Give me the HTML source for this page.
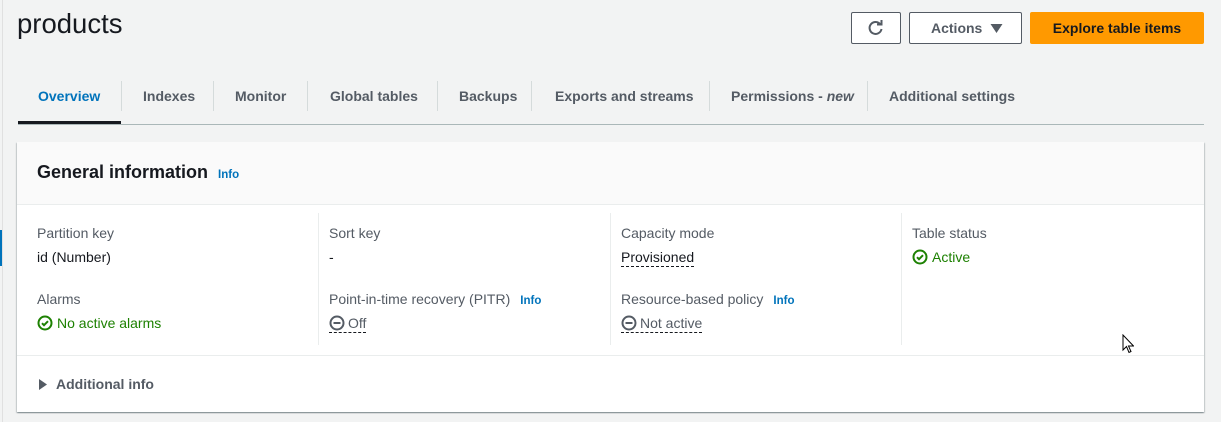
<!DOCTYPE html>
<html><head><style>
*{margin:0;padding:0;box-sizing:border-box}
body{width:1221px;height:422px;background:#f2f3f3;font-family:"Liberation Sans",sans-serif;color:#16191f;position:relative;overflow:hidden;font-size:14px}
.a{position:absolute;white-space:nowrap}
.tab{position:absolute;top:88px;font-weight:bold;font-size:14px;color:#545b64}
.sep{position:absolute;top:81px;width:1px;height:30px;background:#d5dbdb}
.lbl{position:absolute;color:#545b64;font-size:14px}
.val{position:absolute;font-size:14px}
.info{color:#0073bb;font-weight:bold;font-size:11.5px;margin-left:8px}
.dash{border-bottom:1px dashed #16191f;padding-bottom:1px}
.vsep{position:absolute;top:213px;width:1px;height:132px;background:#eaeded}
.grn{color:#1d8102}
</style></head><body>
<div class="a" style="left:0;top:0;width:3px;height:422px;border-right:1px solid #e0e0e0"></div>
<div class="a" style="left:0;top:230px;width:2px;height:36px;background:#0073bb"></div>
<div class="a" style="left:17px;top:8px;font-size:27.5px;color:#16191f">products</div>

<div class="a" style="left:851px;top:12px;width:50px;height:32px;border:1px solid #545b64;background:#fff;border-radius:2px"></div>
<svg class="a" style="left:866px;top:19px" width="20" height="18" viewBox="0 0 20 18"><path d="M14.5 5.5A6 6 0 1 0 15.5 10" fill="none" stroke="#545b64" stroke-width="2"/><path d="M11 5.5h4.5V1" fill="none" stroke="#545b64" stroke-width="2"/></svg>
<div class="a" style="left:909px;top:12px;width:113px;height:32px;border:1px solid #545b64;background:#fff;border-radius:2px;font-weight:bold;color:#545b64;font-size:14px;line-height:30px;padding-left:21px">Actions</div>
<svg class="a" style="left:990px;top:23px" width="13" height="11" viewBox="0 0 13 11"><path d="M0.5 1h12l-6 9z" fill="#545b64"/></svg>
<div class="a" style="left:1030px;top:12px;width:174px;height:32px;background:#ff9900;border-radius:2px;font-weight:bold;color:#16191f;font-size:14px;line-height:32px;text-align:center">Explore table items</div>

<div class="tab" style="left:38px;color:#0073bb">Overview</div>
<div class="sep" style="left:121px"></div>
<div class="tab" style="left:143px">Indexes</div>
<div class="sep" style="left:213px"></div>
<div class="tab" style="left:235px">Monitor</div>
<div class="sep" style="left:307px"></div>
<div class="tab" style="left:330px">Global tables</div>
<div class="sep" style="left:437px"></div>
<div class="tab" style="left:459px">Backups</div>
<div class="sep" style="left:531px"></div>
<div class="tab" style="left:555px">Exports and streams</div>
<div class="sep" style="left:709px"></div>
<div class="tab" style="left:731px">Permissions - <i>new</i></div>
<div class="sep" style="left:867px"></div>
<div class="tab" style="left:889px">Additional settings</div>
<div class="a" style="left:18px;top:124px;width:1186px;height:1px;background:#aab7b8"></div>
<div class="a" style="left:18px;top:121px;width:103px;height:3px;background:#16191f"></div>

<div class="a" style="left:17px;top:142px;width:1187px;height:270px;background:#fff;box-shadow:0 1px 1px 0 rgba(0,28,36,.3),1px 1px 1px 0 rgba(0,28,36,.15),-1px 1px 1px 0 rgba(0,28,36,.15)"></div>
<div class="a" style="left:17px;top:142px;width:1187px;height:63px;background:#fafafa;border-bottom:1px solid #eaeded"></div>
<div class="a" style="left:37px;top:162px;font-size:18px;font-weight:bold">General information<span class="info" style="font-size:11.5px;margin-left:10px">Info</span></div>

<div class="vsep" style="left:318px"></div>
<div class="vsep" style="left:610px"></div>
<div class="vsep" style="left:901px"></div>

<div class="lbl" style="left:37px;top:225px">Partition key</div>
<div class="val" style="left:37px;top:249px">id (Number)</div>
<div class="lbl" style="left:37px;top:291px">Alarms</div>
<div class="val grn" style="left:37px;top:315px"><svg width="16" height="16" viewBox="0 0 16 16" style="vertical-align:-3px;margin-right:4px"><circle cx="8" cy="8" r="6.5" fill="none" stroke="#1d8102" stroke-width="2"/><path d="M5 8.2l2 2 4-4" fill="none" stroke="#1d8102" stroke-width="2"/></svg>No active alarms</div>

<div class="lbl" style="left:329px;top:225px">Sort key</div>
<div class="val" style="left:329px;top:249px">-</div>
<div class="lbl" style="left:329px;top:291px">Point-in-time recovery (PITR)<span class="info" style="margin-left:10px">Info</span></div>
<div class="val dash" style="left:329px;top:315px;color:#545b64;border-color:#16191f"><svg width="16" height="16" viewBox="0 0 16 16" style="vertical-align:-3px;margin-right:3px"><circle cx="8" cy="8" r="6.5" fill="none" stroke="#545b64" stroke-width="2"/><path d="M4.5 8h7" stroke="#545b64" stroke-width="2"/></svg>Off</div>

<div class="lbl" style="left:621px;top:225px">Capacity mode</div>
<div class="val dash" style="left:621px;top:249px">Provisioned</div>
<div class="lbl" style="left:621px;top:291px">Resource-based policy<span class="info" style="margin-left:10px">Info</span></div>
<div class="val dash" style="left:621px;top:315px;color:#545b64"><svg width="16" height="16" viewBox="0 0 16 16" style="vertical-align:-3px;margin-right:3px"><circle cx="8" cy="8" r="6.5" fill="none" stroke="#545b64" stroke-width="2"/><path d="M4.5 8h7" stroke="#545b64" stroke-width="2"/></svg>Not active</div>

<div class="lbl" style="left:912px;top:225px">Table status</div>
<div class="val grn" style="left:912px;top:249px"><svg width="16" height="16" viewBox="0 0 16 16" style="vertical-align:-3px;margin-right:4px"><circle cx="8" cy="8" r="6.5" fill="none" stroke="#1d8102" stroke-width="2"/><path d="M5 8.2l2 2 4-4" fill="none" stroke="#1d8102" stroke-width="2"/></svg>Active</div>

<div class="a" style="left:17px;top:355px;width:1187px;height:1px;background:#eaeded"></div>
<svg class="a" style="left:39px;top:379px" width="9" height="11" viewBox="0 0 9 11"><path d="M0 0l8 5.5L0 11z" fill="#545b64"/></svg>
<div class="a" style="left:56px;top:376px;font-weight:bold;color:#545b64;font-size:14px">Additional info</div>

<svg class="a" style="left:1122px;top:334px" width="12" height="20" viewBox="0 0 12 20"><path d="M1 1v15l3.5-3.5 2.5 6 2-1-2.5-5.5h5z" fill="#fff" stroke="#000" stroke-width="1"/></svg>
</body></html>
